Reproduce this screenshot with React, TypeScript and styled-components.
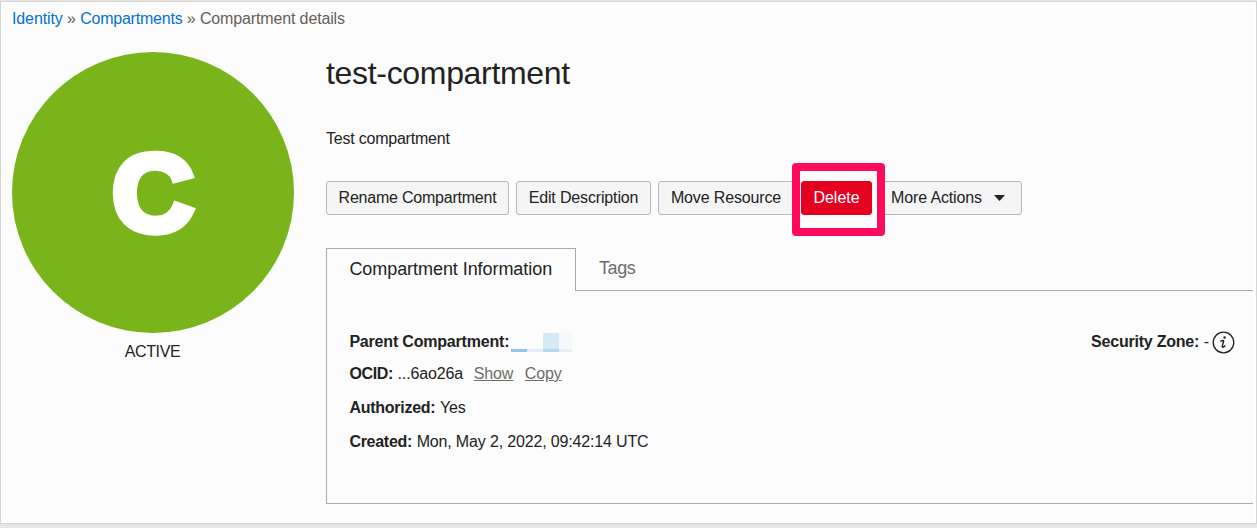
import React from "react";
import styled, { createGlobalStyle } from "styled-components";

const Global = createGlobalStyle`
  * { box-sizing: border-box; }
  body { margin: 0; background: #e8e6e3; font-family: "Liberation Sans", Arial, sans-serif; font-size: 16px; color: #222; }
`;

const Page = styled.div`
  height: 528px;
  padding-top: 1px;
`;
const Frame = styled.main`
  height: 523px;
  border: 1px solid #d4d4d4;
  background: #fff;
  padding: 1px 3px 3px 1px;
`;
const Surface = styled.div`
  height: 100%;
  background: #fcfcfc;
  padding: 6px 0 0 10px;
`;
const Breadcrumb = styled.nav`
  display: flex;
  gap: 4.3px;
  height: 20px;
  line-height: 20px;
  color: #665f5b;
`;
const Crumb = styled.a<{ $spacing?: number }>`
  color: #0572ce;
  letter-spacing: ${(p) => p.$spacing ?? 0}px;
`;
const CurrentCrumb = styled.span`
  letter-spacing: -0.14px;
`;
const Columns = styled.div`
  display: grid;
  grid-template-columns: 282px 1fr;
  column-gap: 32px;
  padding-top: 23px;
`;
const Status = styled.aside`
  text-align: center;
`;
const Badge = styled.svg`
  display: block;
  width: 282px;
  height: 282px;
`;
const StatusText = styled.div`
  margin-top: 8px;
  padding-right: 1px;
  line-height: 20px;
  letter-spacing: -0.35px;
`;
const Title = styled.h1`
  margin: 1px 0 0;
  font-size: 32px;
  line-height: 40px;
  font-weight: 400;
  letter-spacing: -0.32px;
`;
const Description = styled.p`
  margin: 36px 0 0;
  line-height: 20px;
  letter-spacing: -0.22px;
`;
const Actions = styled.div`
  display: flex;
  gap: 7px;
  margin-top: 32px;
`;
const Button = styled.button<{ $width: number; $danger?: boolean; $spacing?: number; $menu?: boolean }>`
  display: flex;
  align-items: center;
  justify-content: center;
  gap: 12px;
  width: ${(p) => p.$width}px;
  height: 34px;
  padding: ${(p) => (p.$menu ? "0 5px 0 0" : "0")};
  border: 1px solid ${(p) => (p.$danger ? "#e6001f" : "#b3b8c0")};
  border-radius: 3px;
  background: ${(p) => (p.$danger ? "#e6001f" : "#f5f5f5")};
  color: ${(p) => (p.$danger ? "#fff" : "#222")};
  font: inherit;
  letter-spacing: ${(p) => p.$spacing ?? 0}px;
  white-space: nowrap;
`;
const Highlighted = styled.div`
  position: relative;
`;
const HighlightBox = styled.div`
  position: absolute;
  left: -9px;
  top: -18px;
  width: 93px;
  height: 73px;
  border: 8px solid #ff0b5b;
  border-radius: 4px;
  box-shadow: inset 0 0 0 1px #fcfcfc;
`;
const Tabs = styled.div`
  display: flex;
  height: 43px;
  margin-top: 33px;
  font-size: 18px;
`;
const Tab = styled.div<{ $active?: boolean; $width?: number }>`
  width: ${(p) => (p.$width ? `${p.$width}px` : "auto")};
  flex: ${(p) => (p.$active ? "none" : "1")};
  padding-left: ${(p) => (p.$active ? 22.4 : 23)}px;
  line-height: ${(p) => (p.$active ? 40 : 41)}px;
  letter-spacing: ${(p) => (p.$active ? -0.06 : -0.4)}px;
  color: ${(p) => (p.$active ? "#222" : "#706c6a")};
  border: solid #aaa;
  border-width: ${(p) => (p.$active ? "1px 1px 0 1px" : "0 0 1px 0")};
`;
const Panel = styled.section`
  display: flex;
  justify-content: space-between;
  height: 213px;
  padding: 41px 18px 0 22.4px;
  border: solid #aaa;
  border-width: 0 0 1px 1px;
`;
const Details = styled.div`
  display: flex;
  flex-direction: column;
`;
const Row = styled.div<{ $height?: number }>`
  display: flex;
  align-items: flex-start;
  gap: 4.6px;
  height: ${(p) => p.$height ?? 34}px;
  line-height: 20px;
  letter-spacing: -0.16px;
  white-space: nowrap;
`;
const Label = styled.strong<{ $spacing?: number }>`
  letter-spacing: ${(p) => p.$spacing ?? -0.22}px;
`;
const TextLink = styled.a<{ $gap: number }>`
  margin-left: ${(p) => p.$gap}px;
  color: #706c6a;
  text-decoration: underline;
`;
const Redaction = styled.svg`
  margin: 1px 0 0 -2.6px;
`;
const InfoIcon = styled.svg`
  margin: -1px 0 0 -1.4px;
`;

export default function App() {
  return (
    <Page>
      <Global />
      <Frame>
        <Surface>
          <Breadcrumb>
            <Crumb $spacing={-0.12}>Identity</Crumb>
            <span>»</span>
            <Crumb $spacing={-0.22}>Compartments</Crumb>
            <span>»</span>
            <CurrentCrumb>Compartment details</CurrentCrumb>
          </Breadcrumb>
          <Columns>
            <Status>
              <Badge viewBox="0 0 282 282">
                <ellipse cx="141" cy="140.5" rx="141" ry="140.5" fill="#78b41a" />
                <text
                  transform="translate(141 178.5) scale(1.04 1.01)"
                  textAnchor="middle"
                  fontFamily="Liberation Sans"
                  fontWeight="700"
                  fontSize="109"
                  fill="#fff"
                  stroke="#fff"
                  strokeWidth="7.4"
                >
                  C
                </text>
              </Badge>
              <StatusText>ACTIVE</StatusText>
            </Status>
            <div>
              <Title>test-compartment</Title>
              <Description>Test compartment</Description>
              <Actions>
                <Button $width={183} $spacing={-0.22}>Rename Compartment</Button>
                <Button $width={135} $spacing={-0.15}>Edit Description</Button>
                <Button $width={136} $spacing={-0.15}>Move Resource</Button>
                <Highlighted>
                  <Button $width={71} $danger>Delete</Button>
                  <HighlightBox />
                </Highlighted>
                <Button $width={143} $spacing={-0.14} $menu>
                  More Actions
                  <svg width="11" height="6" viewBox="0 0 11 6">
                    <path d="M0 0h11L5.5 6z" fill="#222" />
                  </svg>
                </Button>
              </Actions>
              <Tabs>
                <Tab $active $width={250}>Compartment Information</Tab>
                <Tab>Tags</Tab>
              </Tabs>
              <Panel>
                <Details>
                  <Row $height={32}>
                    <Label $spacing={-0.19}>Parent Compartment:</Label>
                    <Redaction width="61" height="19" shapeRendering="crispEdges">
                      <path fill="#d5e9f7" d="M32 0h16v16H32z" />
                      <path fill="#f7f8fb" d="M48 0h13v16H48z" />
                      <path fill="#94c2ea" d="M0 16h16v3H0z" />
                      <path fill="#e3eef8" d="M16 16h45v3H16z" />
                      <path fill="#b4d8f0" d="M32 16h16v3H32z" />
                    </Redaction>
                  </Row>
                  <Row>
                    <Label $spacing={-0.35}>OCID:</Label>
                    <span>...6ao26a</span>
                    <TextLink $gap={6.4}>Show</TextLink>
                    <TextLink $gap={7}>Copy</TextLink>
                  </Row>
                  <Row>
                    <Label $spacing={-0.26}>Authorized:</Label>
                    <span>Yes</span>
                  </Row>
                  <Row>
                    <Label $spacing={-0.28}>Created:</Label>
                    <span>Mon, May 2, 2022, 09:42:14 UTC</span>
                  </Row>
                </Details>
                <Row>
                  <Label $spacing={-0.23}>Security Zone:</Label>
                  <span>-</span>
                  <InfoIcon width="23" height="23" viewBox="0 0 23 23" fill="none">
                    <circle cx="11.5" cy="11.5" r="10.3" stroke="#222" strokeWidth="1.3" />
                    <circle cx="12.6" cy="6.6" r="1.25" fill="#222" />
                    <path d="M8.5 10.6c1.2-1 3.5-1.9 3.1-.3l-1.4 4.9c-.4 1.7 1.5 1.2 3.2-.7" stroke="#222" strokeWidth="1.4" />
                  </InfoIcon>
                </Row>
              </Panel>
            </div>
          </Columns>
        </Surface>
      </Frame>
    </Page>
  );
}
